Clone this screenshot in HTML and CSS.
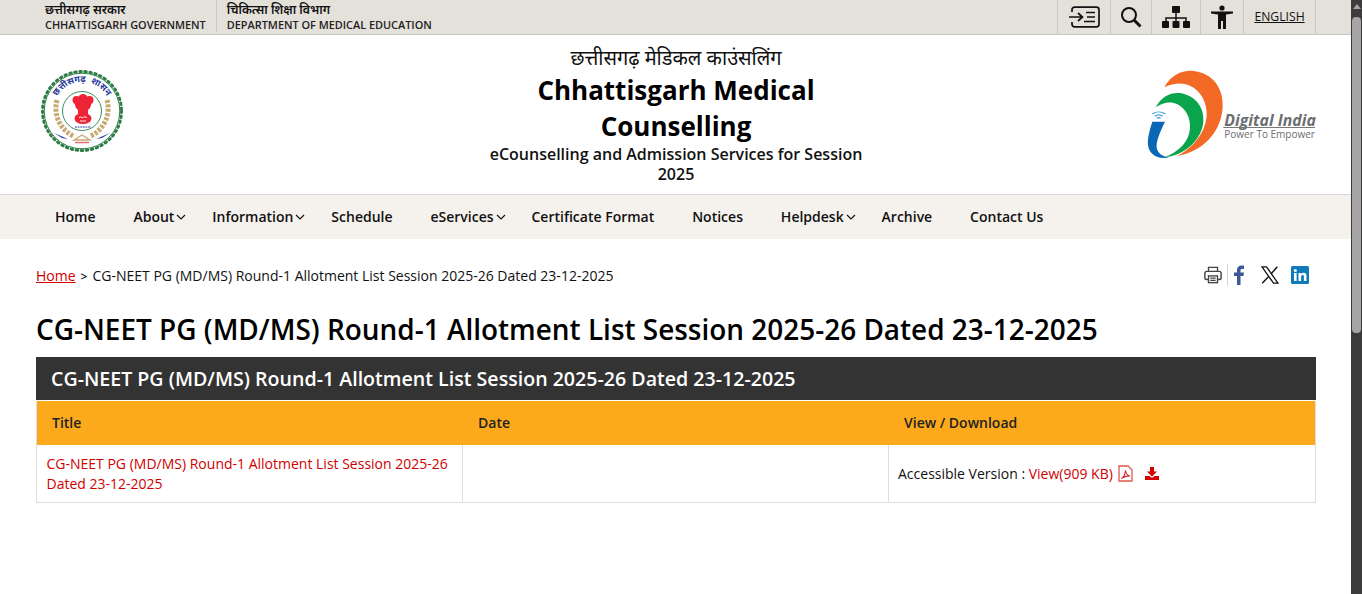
FILE: index.html
```html
<!DOCTYPE html>
<html lang="en">
<head>
<meta charset="utf-8">
<title>CG-NEET PG Round-1 Allotment List</title>
<link rel="stylesheet" href="styles.css">
</head>
<body>
<div class="window">
<div class="page">
  <div class="topbar">
    <div class="gov">
      <div class="gov-item first"><div class="hi">छत्तीसगढ़ सरकार</div><div class="en">CHHATTISGARH GOVERNMENT</div></div>
      <div class="gov-item"><div class="hi">चिकित्सा शिक्षा विभाग</div><div class="en">DEPARTMENT OF MEDICAL EDUCATION</div></div>
    </div>
    <div class="tools">
      <a class="tool t1"><svg width="32" height="22" viewBox="0 0 32 22"><rect x="4" y="1.200" width="27" height="19.600" rx="2.500" fill="none" stroke="#111" stroke-width="1.700"/><rect x="0" y="6" width="7" height="10" fill="#e4e1db"/><path d="M1 11h13M10 7l4.500 4-4.500 4" fill="none" stroke="#111" stroke-width="1.700"/><path d="M18 6.500h9M19 11h8M16 15.500h11" stroke="#111" stroke-width="1.700"/></svg></a>
      <a class="tool t2"><svg width="22" height="22" viewBox="0 0 22 22"><circle cx="9" cy="9" r="7" fill="none" stroke="#111" stroke-width="2"/><path d="M14 14l6.500 6.500" stroke="#111" stroke-width="3"/></svg></a>
      <a class="tool t3"><svg width="28" height="22" viewBox="0 0 28 22"><rect x="10" y="0" width="8" height="7" rx="1" fill="#111"/><path d="M14 6v6M4 15v-3h20v3M14 12v3" fill="none" stroke="#111" stroke-width="1.500"/><rect x="0" y="15" width="7" height="7" rx="1" fill="#111"/><rect x="10.500" y="15" width="7" height="7" rx="1" fill="#111"/><rect x="21" y="15" width="7" height="7" rx="1" fill="#111"/></svg></a>
      <a class="tool t4"><svg width="22" height="24" viewBox="0 0 22 24"><circle cx="11" cy="3" r="2.600" fill="#111"/><path d="M0 6.500h22v2l-7 1V24h-3v-8h-2v8H7V9.500l-7-1z" fill="#111"/></svg></a>
      <a class="tool lang">ENGLISH</a>
    </div>
  </div>

  <header class="masthead">
    <svg class="emblem" width="86" height="84" viewBox="0 0 86 84">
      <circle cx="43" cy="42" r="39.500" fill="none" stroke="#2f7d46" stroke-width="3" stroke-linecap="round" stroke-dasharray="1.500 3.600"/>
      <circle cx="43" cy="42" r="37.800" fill="#fff" stroke="#2f7d46" stroke-width="1"/>
      <path id="arc" d="M14 42A29 29 0 0 1 72 42" fill="none"/>
      <text class="emblem-text" text-anchor="middle"><textPath href="#arc" startOffset="50%">छत्तीसगढ़ &#160;शासन</textPath></text>
      <path d="M18 31C14 46 21 60 34 67M68 31C72 46 65 60 52 67" fill="none" stroke="#c8ab74" stroke-width="5" stroke-dasharray="3 1.400"/>
      <circle cx="43" cy="42" r="19.500" fill="#fff" stroke="#3c8f5e" stroke-width="1"/>
      <g fill="#ee2436">
        <circle cx="37.500" cy="31" r="4"/><circle cx="44" cy="29.500" r="4.500"/><circle cx="50.500" cy="31" r="4"/>
        <path d="M35 33h18l-2 6-2 2H39l-2-2z"/>
        <rect x="39" y="40" width="10" height="6"/>
        <ellipse cx="44" cy="49.500" rx="8.500" ry="5.500"/>
      </g>
      <path d="M40 48.500c2-1.500 3 1 4 0s3-1 4 .5M41 52h6" fill="none" stroke="#fff" stroke-width=".9"/>
      <path d="M36 58h16" stroke="#3a4a9a" stroke-width="1.200" stroke-dasharray="2 .6"/>
      <path d="M15 64l14 6-6-1zM71 64l-14 6 6-1z" fill="#2b3f9f"/>
      <path d="M35 71l8-5 8 5z" fill="#fff" stroke="#c8ab74" stroke-width="1.400"/>
      <path d="M36 73.500h14" stroke="#ee6a75" stroke-width="1.500"/>
    </svg>
    <div class="title">
      <div class="title-hi">छत्तीसगढ़ मेडिकल काउंसलिंग</div>
      <h2 class="title-en">Chhattisgarh Medical Counselling</h2>
      <div class="title-sub">eCounselling and Admission Services for Session 2025</div>
    </div>
    <svg class="di" width="170" height="90" viewBox="318 210 510 270">
      <path d="M373 262C395 222 430 210 460 213C520 220 550 265 548 320C544 395 490 455 410 468C460 445 500 395 500 340C500 285 450 225 373 262z" fill="#f26a25"/>
      <path d="M347 322C365 288 395 275 425 280C470 290 493 325 490 365C486 415 440 465 372 472C420 455 452 420 450 375C448 325 400 285 347 322z" fill="#0aa44c"/>
      <path d="M337 365H375C360 395 348 425 350 443C353 460 368 470 388 472C358 478 328 468 324 435C322 415 330 385 337 365z" fill="#0868b5"/>
      <path d="M337 342C348 334 364 334 376 342M344 349C351 344 361 344 368 349M350 355C353 353 359 353 362 355" fill="none" stroke="#3a9bdc" stroke-width="3.500"/>
      <text x="553" y="378" class="di-main">Digital India</text>
      <path d="M550 382.500H825" stroke="#777" stroke-width="3"/>
      <text x="553" y="413" class="di-sub">Power To Empower</text>
    </svg>
  </header>

  <nav class="nav">
    <a class="nav-item">Home</a>
    <a class="nav-item has-sub">About<svg class="chev" viewBox="0 0 10 6"><path d="M1 1l4 4 4-4" fill="none" stroke="#111" stroke-width="1.200"/></svg></a>
    <a class="nav-item has-sub">Information<svg class="chev" viewBox="0 0 10 6"><path d="M1 1l4 4 4-4" fill="none" stroke="#111" stroke-width="1.200"/></svg></a>
    <a class="nav-item">Schedule</a>
    <a class="nav-item has-sub">eServices<svg class="chev" viewBox="0 0 10 6"><path d="M1 1l4 4 4-4" fill="none" stroke="#111" stroke-width="1.200"/></svg></a>
    <a class="nav-item">Certificate Format</a>
    <a class="nav-item">Notices</a>
    <a class="nav-item has-sub">Helpdesk<svg class="chev" viewBox="0 0 10 6"><path d="M1 1l4 4 4-4" fill="none" stroke="#111" stroke-width="1.200"/></svg></a>
    <a class="nav-item">Archive</a>
    <a class="nav-item">Contact Us</a>
  </nav>

  <main class="content">
    <div class="crumbs">
      <div class="crumb-text"><a class="crumb-link">Home</a><span class="crumb-sep">&gt;</span>CG-NEET PG (MD/MS) Round-1 Allotment List Session 2025-26 Dated 23-12-2025</div>
      <div class="share">
        <svg class="print" width="18" height="18" viewBox="0 0 20 20"><path d="M5 6V1.500h10V6" fill="none" stroke="#444" stroke-width="1.500"/><rect x="1" y="6" width="18" height="9" rx="2" fill="none" stroke="#444" stroke-width="1.600"/><rect x="5" y="11" width="10" height="7.500" fill="#fff" stroke="#444" stroke-width="1.500"/><path d="M7 13.500h6M7 16h6" stroke="#444" stroke-width="1.200"/></svg>
        <span class="share-div"></span>
        <svg class="fb" width="12" height="20" viewBox="0 0 12 20"><path d="M4 20v-9H1V7.500h3V5c0-3 2-4.500 4.500-4.500H11V4H9C7.800 4 7.500 4.600 7.500 5.500v2H11l-.5 3.500h-3v9z" fill="#3b5998"/></svg>
        <svg class="xi" width="18" height="18" viewBox="0 0 18 18"><path d="M1 .8h4.500L17 17.200h-4.500z" fill="none" stroke="#111" stroke-width="1.300"/><path d="M16.300.8L10.200 7.700M7.700 10.500L1.200 17.200" stroke="#111" stroke-width="1.400"/></svg>
        <svg class="li" width="18" height="18" viewBox="0 0 18 18"><rect width="18" height="18" rx="1.500" fill="#0f7ab8"/><rect x="3" y="7" width="2.600" height="8" fill="#fff"/><circle cx="4.300" cy="4.500" r="1.500" fill="#fff"/><path d="M7.500 7h2.500v1.200C10.700 7.200 11.700 6.800 12.700 6.800c2 0 2.800 1.300 2.800 3.400V15h-2.600v-4.300c0-1-.3-1.700-1.200-1.700-1 0-1.600.7-1.600 1.800V15H7.500z" fill="#fff"/></svg>
      </div>
    </div>
    <h1 class="page-title">CG-NEET PG (MD/MS) Round-1 Allotment List Session 2025-26 Dated 23-12-2025</h1>
    <div class="caption">CG-NEET PG (MD/MS) Round-1 Allotment List Session 2025-26 Dated 23-12-2025</div>
    <div class="table">
      <div class="row head">
        <div class="cell">Title</div>
        <div class="cell">Date</div>
        <div class="cell">View / Download</div>
      </div>
      <div class="row body">
        <div class="cell"><a class="link">CG-NEET PG (MD/MS) Round-1 Allotment List Session 2025-26 Dated 23-12-2025</a></div>
        <div class="cell"></div>
        <div class="cell view">Accessible Version :&nbsp;<a class="link">View(909 KB)</a>
          <svg class="pdf" width="15" height="17" viewBox="0 0 15 17"><path d="M1 1h9l4 4v11H1z" fill="#fff" stroke="#e2574c" stroke-width="1.300"/><path d="M3.500 13.500c2-1 3.500-4 4-8 .5 3 2 5 4.500 5.500-3-.5-6 .5-8.500 2.500z" fill="none" stroke="#d3202b" stroke-width="1.100"/></svg>
          <svg class="dl" width="14" height="13" viewBox="0 0 14 13"><path d="M5 0h4v4.500h3L7 9.500 2 4.500h3z" fill="#d40000"/><path d="M0 9h4.500L7 11l2.500-2H14v4H0z" fill="#d40000"/></svg>
        </div>
      </div>
    </div>
  </main>
</div>
<aside class="scrollbar"><div class="arrow"></div><div class="thumb"></div></aside>
</div>
</body>
</html>
```

FILE: styles.css
```css
* { box-sizing: border-box; }
html, body { margin: 0; padding: 0; height: 100%; overflow: hidden; }
body { font-family: "Open Sans", "Noto Sans", "Noto Sans Devanagari", sans-serif; color: #111; background: #fff; }
.window { display: flex; height: 594px; width: 1362px; }
.page { width: 1351px; flex: none; overflow: hidden; }
.scrollbar { width: 11px; flex: none; background: #3c3c3c; display: flex; flex-direction: column; align-items: center; }
.arrow { width: 0; height: 0; margin-top: 4px; border-left: 4px solid transparent; border-right: 4px solid transparent; border-bottom: 5px solid #a5a5a5; }
.thumb { width: 9px; height: 316px; margin-top: 8px; border-radius: 4px; background: #a5a5a5; }

.topbar { height: 35px; background: #e4e1db; border-bottom: 1px solid #c9c7c2; display: flex; justify-content: space-between; padding: 0 35px 0 36px; }
.gov { display: flex; height: 32px; }
.gov-item { padding: 0 10px; border-left: 1px solid #c9c7c2; }
.gov-item.first { border-left: 0; padding-left: 9px; }
.hi { font-size: 12.300px; line-height: 20px; font-weight: 600; height: 17px; }
.en { font-size: 10.900px; line-height: 15px; font-weight: 600; color: #222; }
.tools { display: flex; height: 34px; }
.tool { display: flex; align-items: center; justify-content: center; border-left: 1px solid #c9c7c2; height: 34px; padding-bottom: 1px; }
.t1 { width: 53px; }
.t2 { width: 41px; }
.t3 { width: 49px; }
.t4 { width: 43px; }
.lang { width: 73px; border-right: 1px solid #c9c7c2; font-size: 12.200px; color: #111; text-decoration: underline; padding-bottom: 2px; }

.masthead { height: 159px; display: grid; grid-template-columns: 1fr auto 1fr; align-items: start; padding: 0 35px 0 36px; }
.emblem { margin: 34px 0 0 3px; }
.title { width: 388px; text-align: center; padding-top: 9px; }
.title-hi { font-size: 20px; line-height: 28px; color: #111; }
.title-en { margin: 0; font-size: 26px; line-height: 36px; font-weight: 700; color: #000; }
.title-sub { font-size: 16px; line-height: 20px; font-weight: 600; }
.di { margin-top: 35px; justify-self: end; }
.di-main { font: italic 700 47.500px "Open Sans", sans-serif; fill: #6b6e70; }
.di-sub { font: 400 30px "Open Sans", sans-serif; fill: #6b6e70; }
.emblem-text { font-size: 9px; font-weight: 700; fill: #2a3a9c; }

.nav { height: 45px; background: #f5f2ed; border-top: 1px solid #d9d9d9; display: flex; align-items: center; padding: 0 36px 2px; }
.nav-item { position: relative; font-size: 14px; font-weight: 600; color: #111; padding: 0 19px; display: flex; align-items: center; margin-right: -.1px; }
.chev { position: absolute; right: 7px; top: 7px; width: 10px; height: 6px; }

.content { padding: 0 35px 0 36px; }
.crumbs { height: 40px; margin-top: 16px; display: flex; justify-content: space-between; align-items: center; }
.crumb-text { font-size: 14px; color: #111; }
.crumb-link { color: #d00000; text-decoration: underline; }
.crumb-sep { margin: 0 5px; font-size: 12px; font-weight: 600; }
.share { display: flex; align-items: center; padding-right: 7px; }
.print { margin-right: 5px; }
.share-div { width: 1px; height: 22px; background: #d5d5d5; }
.fb { margin-left: 5px; margin-right: 16px; }
.xi { margin-right: 12px; }
.page-title { margin: 14px 0 0; font-size: 27.950px; line-height: 40px; font-weight: 600; color: #000; height: 48px; white-space: nowrap; }
.caption { height: 43px; background: #333; color: #fff; font-size: 19.600px; font-weight: 600; line-height: 44px; padding-left: 15px; }
.table { border: 1px solid #ddd; border-top: 1px solid #fff; }
.row { display: grid; grid-template-columns: 425px 426px 1fr; }
.head { background: #fcaa1c; height: 44px; }
.head .cell { font-size: 14px; font-weight: 600; color: #222; line-height: 44px; padding-left: 16px; }
.head .cell:first-child { padding-left: 15px; }
.body { height: 57px; }
.body .cell { font-size: 14px; line-height: 20px; padding: 9px 10px 0; border-left: 1px solid #ddd; color: #111; }
.body .cell:first-child { border-left: 0; padding: 9px 12px 0 9.500px; }
.body .view { display: flex; align-items: center; padding: 0 9px; }
.link { color: #d00000; }
.pdf { margin-left: 5px; }
.dl { margin-left: 12px; }
```
